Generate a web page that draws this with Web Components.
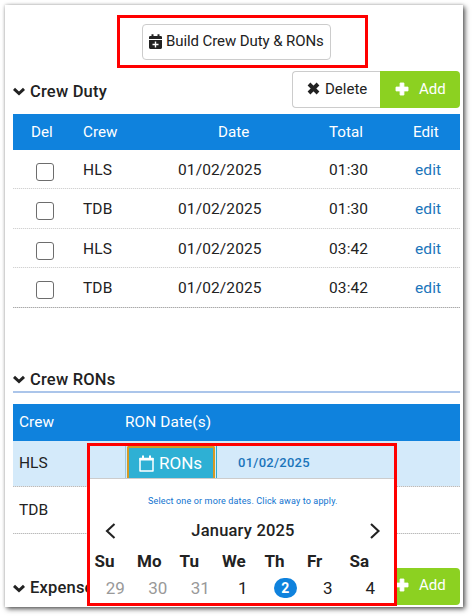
<!DOCTYPE html>
<html lang="en">
<head>
<meta charset="utf-8">
<title>Crew Duty</title>
<style>
html,body{margin:0;width:472px;height:616px;overflow:hidden;background:#fff}
body{font-family:Roboto,"Liberation Sans",sans-serif;font-size:16px;color:#222}
</style>
</head>
<body>
<crew-page></crew-page>
<script>
const define = (name, html, init) => customElements.define(name, class extends HTMLElement {
  connectedCallback() {
    if (this.shadowRoot) return;
    const root = this.attachShadow({ mode: 'open' });
    root.innerHTML = typeof html === 'function' ? html(this) : html;
    if (init) init(this, root);
  }
});

const icons = {
  down: ['0 0 12 9', '<path d="M1 1.900 6 6.500 11 1.900" fill="none" stroke="#222" stroke-width="3"/>'],
  plus: ['0 0 14 14', '<path d="M5.100 1h3.800v4.100H13v3.800H8.900V13H5.100V8.900H1V5.100h4.100z" fill="#fff" stroke="#fff" stroke-width=".9" stroke-linejoin="round"/>'],
  cross: ['0 0 13 13', '<path d="M2 2l9 9M11 2l-9 9" stroke="#222" stroke-width="3.900" fill="none"/>'],
  calplus: ['0 0 13 15', '<path d="M0 5V3.300Q0 2 1.300 2H2.500V.2h2V2h4V.2h2V2h1.200Q13 2 13 3.300V5zM0 6h13v7.600Q13 15 11.700 15H1.300Q0 15 0 13.600z" fill="#222"/><path d="M6.500 7.500v6M3.500 10.500h6" stroke="#fff" stroke-width="1.400"/>'],
  cal: ['0 0 15 17', '<path d="M1 3.500h13v12.600H1z" fill="none" stroke="#fff" stroke-width="1.500" stroke-linejoin="round"/><path d="M.5 3h14v2.600H.5zM3 .5h2V3H3zM10 .5h2V3h-2z" fill="#fff"/>'],
  prev: ['0 0 11 16', '<path d="M9.500 1 2 8l7.500 7" fill="none" stroke="#222" stroke-width="2.100"/>'],
  next: ['0 0 11 16', '<path d="M1 1l7.500 7L1 15" fill="none" stroke="#222" stroke-width="2.100"/>']
};
define('ui-icon', el => {
  const [box, body] = icons[el.getAttribute('name')];
  const [, , w, h] = box.split(' ');
  return `<style>:host{display:block;flex:none;line-height:0}svg{display:block}</style><svg width="${w}" height="${h}" viewBox="${box}">${body}</svg>`;
});

define('section-title', `<style>:host{display:flex;align-items:center;gap:5px;font-weight:500;font-size:16.500px;letter-spacing:.2px;line-height:20px;white-space:nowrap}</style><ui-icon name="down"></ui-icon><span><slot></slot></span>`);

define('build-panel', `<style>
:host{display:flex;box-sizing:border-box;width:251px;height:53px;border:3px solid #f00;padding:6px 0 0 22px}
button{all:unset;box-sizing:border-box;display:flex;align-items:center;width:189px;height:36px;border:1px solid #ccc;border-radius:4px;padding:0 0 2px 6px;gap:4px;white-space:nowrap;font-size:15px;letter-spacing:-.09px;line-height:20px}
</style><button><ui-icon name="calplus"></ui-icon><span><slot></slot></span></button>`);

define('delete-button', `<style>:host{box-sizing:border-box;display:flex;align-items:center;width:88px;height:37px;border:1px solid #ccc;border-right:0;border-radius:4px 0 0 4px;padding:0 0 2px 14px;gap:5px;font-size:15px}</style><ui-icon name="cross"></ui-icon><span><slot></slot></span>`);

define('add-button', `<style>:host{box-sizing:border-box;display:flex;align-items:center;width:80px;height:37px;background:#8cd121;border-radius:0 4px 4px 0;padding:0 0 2px 15px;gap:10px;font-size:15px;color:#fff}:host([round]){border-radius:4px}</style><ui-icon name="plus"></ui-icon><span><slot></slot></span>`);

define('duty-row', `<style>
:host{display:grid;grid-template-columns:70px 96px 150px 80px 51px;height:39.400px;box-sizing:border-box;line-height:40px;font-size:15.500px;letter-spacing:.12px;background:linear-gradient(90deg,#d2d2d2 50%,#f4f4f4 50%) 0 100%/2px 1px repeat-x}
:host([last]){background-image:linear-gradient(90deg,#aaa 50%,#ddd 50%)}
i{box-sizing:border-box;width:18px;height:18px;border:1px solid #6d6d6d;border-radius:3px;margin:13px 0 0 23px}
</style><i></i><slot></slot>`);

define('duty-table', `<style>
:host{display:block;width:447px}
.head{display:grid;grid-template-columns:70px 135px 111px 84px 47px;height:36.500px;background:#0f82dd;color:#fff;line-height:37px;font-size:15.200px}
.head span:first-child{padding-left:18px}
.e{color:#1b75bb;margin-left:6px}
.d{margin-left:-1px}
</style><div class="head"><span>Del</span><span>Crew</span><span>Date</span><span>Total</span><span>Edit</span></div><div id="rows"></div>`, (el, root) => {
  root.getElementById('rows').innerHTML = [['HLS', '01:30'], ['TDB', '01:30'], ['HLS', '03:42'], ['TDB', '03:42']]
    .map(([n, t], i) => `<duty-row ${i === 3 ? 'last' : ''}><span>${n}</span><span class="d">01/02/2025</span><span>${t}</span><span class="e">edit</span></duty-row>`).join('');
});

define('ron-table', `<style>
:host{display:block;width:447px;font-size:15.500px}
div{box-sizing:border-box;padding-left:6px;background:linear-gradient(90deg,#bbb 50%,#e5e5e5 50%) 0 100%/2px 1px repeat-x}
.head{display:grid;grid-template-columns:106px 1fr;height:37px;line-height:37px;background:#0f82dd;color:#fff;font-size:15.400px;letter-spacing:.1px}
.a{height:46px;line-height:45px;background-color:#d4eafa}.b{height:47px;line-height:46px}
</style><div class="head"><span>Crew</span><span>RON Date(s)</span></div><div class="a">HLS</div><div class="b">TDB</div>`);

define('ron-picker', `<style>
:host{display:block;box-sizing:border-box;width:310px;height:163px;border:3px solid #f00;background:#fff;overflow:hidden}
.bar{display:flex;height:32px;background:#d4eafa;border-bottom:1px solid #ccc;padding-left:35px}
.field{display:flex;border-left:1px solid #9bc8df;border-right:1px solid #2cabd0;padding:0 1px}
.btn{box-sizing:border-box;width:88px;height:32px;border:2px solid #d39a24;border-bottom:0;border-radius:2px 2px 0 0;background:#2eb0d4;color:#fff;display:flex;align-items:center;gap:5px;padding-left:10px;font-size:17px}
.date{font-weight:500;font-size:13px;color:#1b75bb;line-height:34px;margin-left:21px;letter-spacing:.26px}
.hint{font-size:9px;letter-spacing:.15px;line-height:12px;margin-top:16px;padding-left:58px;color:#0f73cf;white-space:nowrap}
.month{display:flex;align-items:center;justify-content:space-between;padding:0 13px 0 15px;margin-top:13px;font-weight:500;font-size:16.500px;letter-spacing:.2px;line-height:22px}
.week{display:grid;grid-template-columns:repeat(7,42.500px);font-size:17px;line-height:22px}
.names{font-weight:700;margin:8px 0 0 4.500px}
.days{margin:5px 0 0 4px;color:#222}
.days span{text-align:center}
.week .off{color:#999}
.week .sel{justify-self:center;box-sizing:border-box;background:#0f82dd;color:#fff;border-radius:10px;width:23px;height:20px;font-size:14px;font-weight:700;line-height:20px;margin-top:1px}
</style>
<div class="bar"><div class="field"><div class="btn"><ui-icon name="cal"></ui-icon><span>RONs</span></div></div><span class="date">01/02/2025</span></div>
<div class="hint">Select one or more dates. Click away to apply.</div>
<div class="month"><ui-icon name="prev"></ui-icon><span>January 2025</span><ui-icon name="next"></ui-icon></div>
<div class="week names"><span>Su</span><span>Mo</span><span>Tu</span><span>We</span><span>Th</span><span>Fr</span><span>Sa</span></div>
<div class="week days"><span class="off">29</span><span class="off">30</span><span class="off">31</span><span>1</span><span class="sel">2</span><span>3</span><span>4</span></div>`);

define('crew-page', `<style>
:host{display:block;box-sizing:border-box;width:472px;height:616px;padding:5px 9px 9px 5px}
main{position:relative;box-sizing:border-box;width:458px;height:602px;background:#fff;box-shadow:2px 2px 5px 0 rgba(0,0,0,.65),0 0 3px rgba(0,0,0,.2);padding:10px 3px 0 8px;display:flex;flex-direction:column}
build-panel{margin-left:104px}
.top{display:flex;justify-content:space-between;height:37px;margin:3px 0 5.500px}
.top section-title{padding-top:4px}
.btns{display:flex}
.rons{margin-top:61px;border-bottom:2px solid #abc5ea;height:22px;margin-bottom:11px}
.exp{display:flex;justify-content:space-between;margin-top:34px;height:37px}
.exp section-title{padding-top:4px}
ron-picker{position:absolute;left:82px;top:438px}
</style><main>
<build-panel>Build Crew Duty &amp; RONs</build-panel>
<div class="top"><section-title>Crew Duty</section-title><div class="btns"><delete-button>Delete</delete-button><add-button>Add</add-button></div></div>
<duty-table></duty-table>
<section-title class="rons">Crew RONs</section-title>
<ron-table></ron-table>
<div class="exp"><section-title>Expenses</section-title><add-button round>Add</add-button></div>
<ron-picker></ron-picker>
</main>`);
</script>
</body>
</html>
